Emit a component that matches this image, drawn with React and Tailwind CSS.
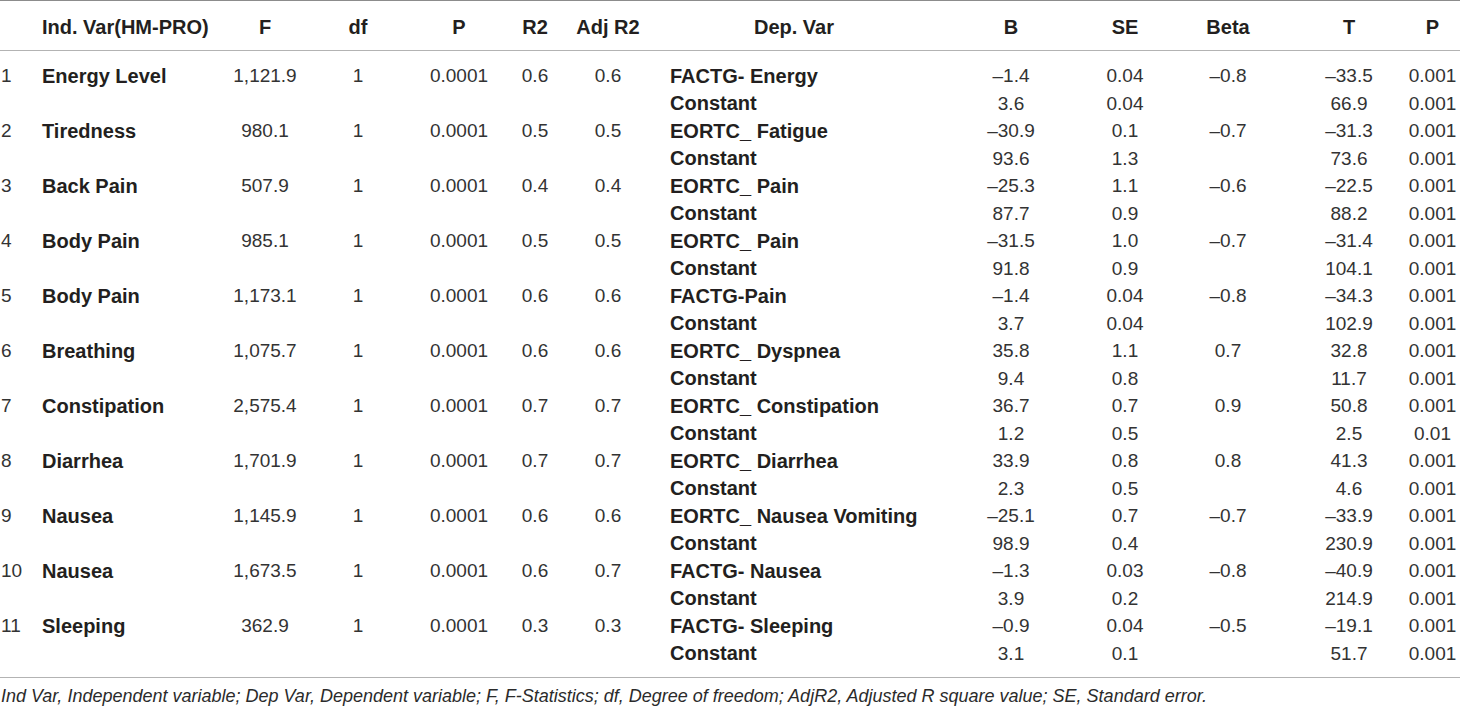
const rows = [
  { n: '1', iv: 'Energy Level', f: '1,121.9', p: '0.0001', r2: '0.6', adj: '0.6', dep: 'FACTG- Energy', b: ['–1.4', '3.6'], se: ['0.04', '0.04'], beta: '–0.8', t: ['–33.5', '66.9'], pp: ['0.001', '0.001'] },
  { n: '2', iv: 'Tiredness', f: '980.1', p: '0.0001', r2: '0.5', adj: '0.5', dep: 'EORTC_ Fatigue', b: ['–30.9', '93.6'], se: ['0.1', '1.3'], beta: '–0.7', t: ['–31.3', '73.6'], pp: ['0.001', '0.001'] },
  { n: '3', iv: 'Back Pain', f: '507.9', p: '0.0001', r2: '0.4', adj: '0.4', dep: 'EORTC_ Pain', b: ['–25.3', '87.7'], se: ['1.1', '0.9'], beta: '–0.6', t: ['–22.5', '88.2'], pp: ['0.001', '0.001'] },
  { n: '4', iv: 'Body Pain', f: '985.1', p: '0.0001', r2: '0.5', adj: '0.5', dep: 'EORTC_ Pain', b: ['–31.5', '91.8'], se: ['1.0', '0.9'], beta: '–0.7', t: ['–31.4', '104.1'], pp: ['0.001', '0.001'] },
  { n: '5', iv: 'Body Pain', f: '1,173.1', p: '0.0001', r2: '0.6', adj: '0.6', dep: 'FACTG-Pain', b: ['–1.4', '3.7'], se: ['0.04', '0.04'], beta: '–0.8', t: ['–34.3', '102.9'], pp: ['0.001', '0.001'] },
  { n: '6', iv: 'Breathing', f: '1,075.7', p: '0.0001', r2: '0.6', adj: '0.6', dep: 'EORTC_ Dyspnea', b: ['35.8', '9.4'], se: ['1.1', '0.8'], beta: '0.7', t: ['32.8', '11.7'], pp: ['0.001', '0.001'] },
  { n: '7', iv: 'Constipation', f: '2,575.4', p: '0.0001', r2: '0.7', adj: '0.7', dep: 'EORTC_ Constipation', b: ['36.7', '1.2'], se: ['0.7', '0.5'], beta: '0.9', t: ['50.8', '2.5'], pp: ['0.001', '0.01'] },
  { n: '8', iv: 'Diarrhea', f: '1,701.9', p: '0.0001', r2: '0.7', adj: '0.7', dep: 'EORTC_ Diarrhea', b: ['33.9', '2.3'], se: ['0.8', '0.5'], beta: '0.8', t: ['41.3', '4.6'], pp: ['0.001', '0.001'] },
  { n: '9', iv: 'Nausea', f: '1,145.9', p: '0.0001', r2: '0.6', adj: '0.6', dep: 'EORTC_ Nausea Vomiting', b: ['–25.1', '98.9'], se: ['0.7', '0.4'], beta: '–0.7', t: ['–33.9', '230.9'], pp: ['0.001', '0.001'] },
  { n: '10', iv: 'Nausea', f: '1,673.5', p: '0.0001', r2: '0.6', adj: '0.7', dep: 'FACTG- Nausea', b: ['–1.3', '3.9'], se: ['0.03', '0.2'], beta: '–0.8', t: ['–40.9', '214.9'], pp: ['0.001', '0.001'] },
  { n: '11', iv: 'Sleeping', f: '362.9', p: '0.0001', r2: '0.3', adj: '0.3', dep: 'FACTG- Sleeping', b: ['–0.9', '3.1'], se: ['0.04', '0.1'], beta: '–0.5', t: ['–19.1', '51.7'], pp: ['0.001', '0.001'] },
]

const grid = 'grid grid-cols-[42px_183px_80px_106px_96px_56px_90px_282px_152px_76px_130px_112px_55px] items-center'

function Line({ cells }) {
  return (
    <div className={`${grid} h-[27.5px] leading-none`}>
      <div className="pl-[1px]">{cells[0]}</div>
      <div className="text-[20px] font-bold text-[#231f20]">{cells[1]}</div>
      <div className="text-center">{cells[2]}</div>
      <div className="text-center">{cells[3]}</div>
      <div className="text-center">{cells[4]}</div>
      <div className="text-center">{cells[5]}</div>
      <div className="text-center">{cells[6]}</div>
      <div className="px-[17px] text-[20px] font-bold whitespace-nowrap text-[#231f20]">{cells[7]}</div>
      <div className="text-center">{cells[8]}</div>
      <div className="text-center">{cells[9]}</div>
      <div className="text-center">{cells[10]}</div>
      <div className="text-center">{cells[11]}</div>
      <div className="text-center">{cells[12]}</div>
    </div>
  )
}

export default function App() {
  return (
    <div className="w-[1460px] h-[707px] bg-white font-['Liberation_Sans',Arial,sans-serif] text-[19px] text-[#333333]">
      <div className="border-t border-[#8c8c8c]">
        <div className={`${grid} h-[50px] border-b border-[#b3b3b3] text-[20px] font-bold text-[#231f20] pt-[2px]`}>
          <div />
          <div>Ind. Var(HM-PRO)</div>
          <div className="text-center">F</div>
          <div className="text-center">df</div>
          <div className="text-center">P</div>
          <div className="text-center">R2</div>
          <div className="text-center">Adj R2</div>
          <div className="px-[17px] text-center">Dep. Var</div>
          <div className="text-center">B</div>
          <div className="text-center">SE</div>
          <div className="text-center">Beta</div>
          <div className="text-center">T</div>
          <div className="text-center">P</div>
        </div>
        <div className="pt-[11px] pb-[10px] border-b border-[#b3b3b3]">
          {rows.map((r) => (
            <div key={r.n}>
              <Line cells={[r.n, r.iv, r.f, '1', r.p, r.r2, r.adj, r.dep, r.b[0], r.se[0], r.beta, r.t[0], r.pp[0]]} />
              <Line cells={['', '', '', '', '', '', '', 'Constant', r.b[1], r.se[1], '', r.t[1], r.pp[1]]} />
            </div>
          ))}
        </div>
        <p className="pl-[1px] pt-[5px] text-[18px] italic text-[#2b2b2b]">
          Ind Var, Independent variable; Dep Var, Dependent variable; F, F-Statistics; df, Degree of freedom; AdjR2, Adjusted R square value; SE, Standard error.
        </p>
      </div>
    </div>
  )
}
